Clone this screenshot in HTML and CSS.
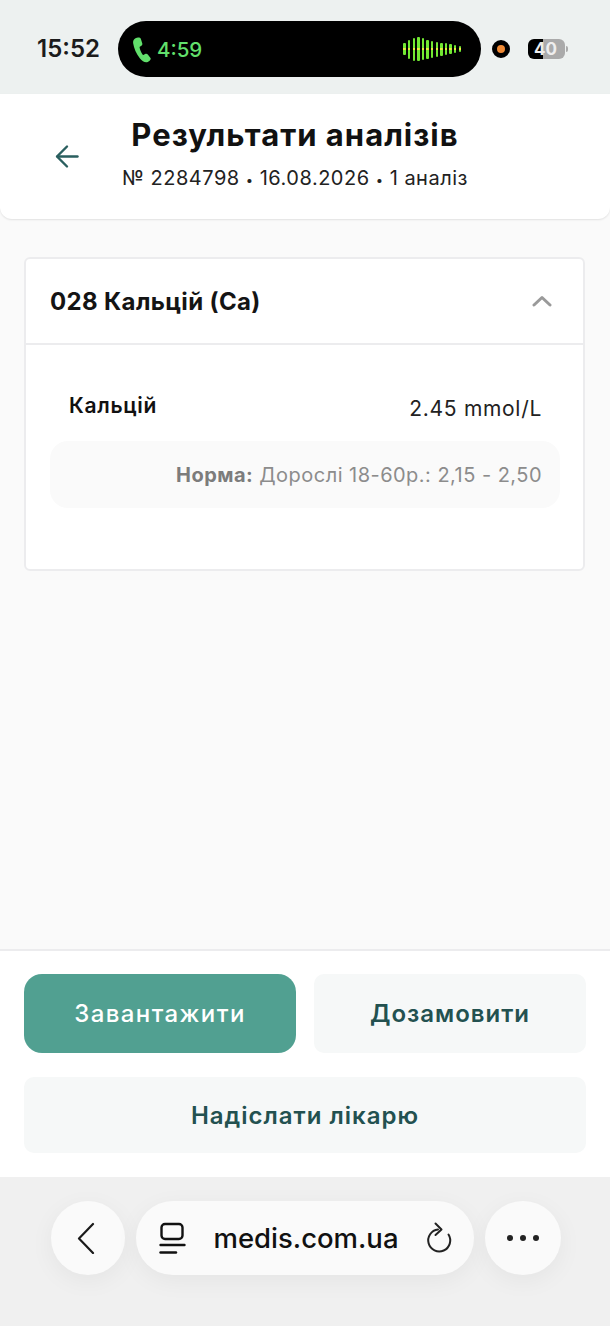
FILE: index.html
```html
<!DOCTYPE html>
<html lang="uk">
<head>
    <meta charset="UTF-8">
    <meta name="viewport" content="width=device-width, initial-scale=1.0">
    <title>Результати аналізів</title>
    <link rel="stylesheet" href="styles.css">
</head>
<body>
    <div class="status-bar">
        <span class="clock">15:52</span>
        <div class="island">
            <svg class="phone-icon" width="18" height="26" viewBox="0 0 18 26">
                <path d="M2.500 1.200 C.6 2.200 -.2 4 .2 6.500 C.9 11 3.200 16.800 7 21.500 C9.300 24.300 12.300 26 14.800 24.900 C16.900 24 18.300 22.400 17.500 21 L14.800 17.500 C14.100 16.600 13 16.400 12.100 17 L10.800 17.800 C10.300 18.100 9.800 18 9.500 17.500 C8 15.200 7 12.900 6.600 10.500 C6.500 10 6.800 9.600 7.200 9.400 L8.400 8.700 C9.300 8.200 9.500 7.300 9.300 6.400 L7.900 1.900 C7.400 .5 4.600 .1 2.500 1.200 Z" fill="#62e06c"/>
            </svg>
            <span class="call-time">4:59</span>
            <div class="wave">
                <i style="height:12px"></i><i style="height:19px"></i><i style="height:23px"></i><i style="height:24px"></i><i style="height:22px"></i><i style="height:19px"></i><i style="height:17px"></i><i style="height:15px"></i><i style="height:13px"></i><i style="height:12px"></i><i style="height:10px"></i><i style="height:8px"></i><i style="height:6px"></i>
            </div>
        </div>
        <span class="rec-dot"></span>
        <div class="battery">
            <div class="battery-body"><span>40</span></div>
            <span class="battery-tip"></span>
        </div>
    </div>

    <header class="page-head">
        <button class="back-btn" aria-label="Назад">
            <svg width="26" height="26" viewBox="0 0 26 26" fill="none" stroke="#2a5f5f" stroke-width="2.4" stroke-linecap="round" stroke-linejoin="round">
                <path d="M23.500 13.500H3.500"/>
                <path d="M13 3.500 L3 13.500 L13 23.500"/>
            </svg>
        </button>
        <div class="head-text">
            <h1>Результати аналізів</h1>
            <p>№ 2284798 <span class="sep">•</span> 16.08.2026 <span class="sep">•</span> 1 аналіз</p>
        </div>
    </header>

    <main class="content">
        <section class="card">
            <div class="card-head">
                <h2>028 Кальцій (Ca)</h2>
                <svg width="20" height="12" viewBox="0 0 20 12" fill="none" stroke="#9a9a9a" stroke-width="3" stroke-linecap="round" stroke-linejoin="round">
                    <path d="M2 10 L10 2.500 L18 10"/>
                </svg>
            </div>
            <div class="card-body">
                <div class="result-row">
                    <span class="result-name">Кальцій</span>
                    <span class="result-value">2.45 mmol/L</span>
                </div>
                <div class="norm"><b>Норма:</b> Дорослі 18-60р.: 2,15 - 2,50</div>
            </div>
        </section>
    </main>

    <div class="actions">
        <div class="actions-row">
            <button class="btn btn-primary">Завантажити</button>
            <button class="btn btn-light">Дозамовити</button>
        </div>
        <button class="btn btn-light btn-wide">Надіслати лікарю</button>
    </div>

    <div class="browser-bar">
        <button class="round-btn" aria-label="Back">
            <svg width="20" height="32" viewBox="0 0 20 32" fill="none" stroke="#1a1a1a" stroke-width="2.200" stroke-linecap="round" stroke-linejoin="round">
                <path d="M17 2 L3 16.500 L17 31"/>
            </svg>
        </button>
        <div class="url-pill">
            <svg width="28" height="32" viewBox="0 0 28 32" fill="none" stroke="#111" stroke-width="2.400" stroke-linecap="round">
                <rect x="2.500" y="2" width="21" height="15" rx="3.500"/>
                <path d="M1.500 23H25.500"/>
                <path d="M1.500 30.500H17"/>
            </svg>
            <span class="url">medis.com.ua</span>
            <svg width="28" height="32" viewBox="0 0 28 32" fill="none" stroke="#222" stroke-width="2" stroke-linecap="round" stroke-linejoin="round">
                <path d="M13 7.500 A11 11 0 1 0 23.500 12.500"/>
                <path d="M10.500 1.500 L16.500 7.500 L10.500 13"/>
            </svg>
        </div>
        <button class="round-btn round-btn-wide" aria-label="More">
            <span class="dot"></span><span class="dot"></span><span class="dot"></span>
        </button>
    </div>
</body>
</html>
```

FILE: styles.css
```css
* {
    box-sizing: border-box;
}
body {
    margin: 0;
    width: 610px;
    height: 1326px;
    display: flex;
    flex-direction: column;
    overflow: hidden;
    background: #fafafa;
    font-family: 'Inter', 'Noto Sans', sans-serif;
    color: #111;
}
button {
    font-family: inherit;
    border: none;
    cursor: pointer;
}

/* phone status bar */
.status-bar {
    height: 94px;
    flex: none;
    background: #edf1f0;
    display: flex;
    align-items: flex-start;
    padding: 21px 0 0 37px;
}
.clock {
    font-size: 24px;
    font-weight: 600;
    color: #1b1b1b;
    line-height: 56px;
    width: 81px;
}
.island {
    width: 363px;
    height: 56px;
    border-radius: 28px;
    background: #000;
    display: flex;
    align-items: center;
    padding-left: 15px;
    color: #62e06c;
}
.phone-icon {
    flex: none;
    margin-top: 1px;
}
.call-time {
    font-size: 20.5px;
    font-weight: 500;
    margin-left: 6px;
}
.wave {
    margin-left: auto;
    margin-right: 20px;
    display: flex;
    align-items: center;
    gap: 2.1px;
}
.wave i {
    display: block;
    width: 2.5px;
    border-radius: 1px;
    background: linear-gradient(#ecec40, #ecec40) center / 100% 2px no-repeat, #72e832;
}
.rec-dot {
    flex: none;
    width: 18px;
    height: 18px;
    margin: 19px 0 0 11px;
    border-radius: 50%;
    background: #f08a35;
    border: 5px solid #000;
}
.battery {
    display: flex;
    align-items: center;
    margin: 18px 0 0 18px;
}
.battery-body {
    width: 37px;
    height: 20px;
    border-radius: 6px;
    background: linear-gradient(90deg, #000 0 40%, #aaa 40%);
    color: #eee;
    font-size: 17px;
    font-weight: 700;
    line-height: 20px;
    text-align: center;
    padding-right: 2px;
}
.battery-tip {
    width: 2px;
    height: 6px;
    margin-left: 1px;
    border-radius: 0 2px 2px 0;
    background: #aaa;
}

/* page header */
.page-head {
    height: 125px;
    flex: none;
    background: #fff;
    border-radius: 0 0 12px 12px;
    box-shadow: 0 1px 2px rgba(0, 0, 0, 0.1);
    display: flex;
    position: relative;
}
.back-btn {
    background: none;
    padding: 0;
    width: 26px;
    height: 26px;
    margin: 49px 0 0 54px;
    flex: none;
}
.head-text {
    flex: 1;
    text-align: center;
    padding: 21px 20px 0 0;
    margin-left: -80px;
}
.head-text h1 {
    margin: 0;
    font-size: 31px;
    font-weight: 700;
    line-height: 40px;
    letter-spacing: 1px;
    color: #111;
}
.head-text p {
    margin: 9px 0 0;
    font-size: 20px;
    line-height: 28px;
    letter-spacing: 0.5px;
    color: #222;
}
.sep {
    font-size: 13px;
}

/* analysis card */
.content {
    flex: 1;
    padding: 38px 25px 0 24px;
}
.card {
    height: 314px;
    background: #fff;
    border: 2px solid #ececee;
    border-radius: 6px;
}
.card-head {
    height: 86px;
    border-bottom: 2px solid #ececee;
    display: flex;
    align-items: center;
    justify-content: space-between;
    padding: 0 31px 0 24px;
}
.card-head h2 {
    margin: 0;
    font-size: 24px;
    font-weight: 700;
    letter-spacing: 0.35px;
    color: #141414;
}
.card-body {
    padding: 0 23px 0 24px;
}
.result-row {
    display: flex;
    justify-content: space-between;
    padding: 47px 18px 0 19px;
    height: 96px;
}
.result-name {
    font-size: 21px;
    font-weight: 600;
    line-height: 28px;
    letter-spacing: 0.7px;
    color: #111;
}
.result-value {
    font-size: 21px;
    line-height: 34px;
    letter-spacing: 0.7px;
    color: #222;
}
.norm {
    height: 67px;
    background: #fafafa;
    border-radius: 18px;
    padding-right: 18px;
    text-align: right;
    font-size: 20px;
    line-height: 68px;
    letter-spacing: 0.47px;
    color: #8c8c8c;
}
.norm b {
    color: #7c7c7c;
}

/* bottom buttons */
.actions {
    flex: none;
    height: 228px;
    background: #fff;
    border-top: 2px solid #ececee;
    padding: 23px 24px 0;
}
.actions-row {
    display: flex;
    gap: 18px;
    margin-bottom: 24px;
}
.btn {
    flex: 1;
    height: 79px;
    font-size: 24px;
    font-weight: 600;
    letter-spacing: 1px;
    border-radius: 10px;
}
.btn-primary {
    background: #51a091;
    color: #fff;
    border-radius: 18px;
    font-weight: 500;
    letter-spacing: 1.4px;
}
.btn-light {
    background: #f6f8f8;
    color: #235150;
}
.btn-wide {
    display: block;
    width: 100%;
    height: 76px;
}

/* browser toolbar */
.browser-bar {
    flex: none;
    height: 149px;
    background: #f0f0f0;
    display: flex;
    align-items: flex-start;
    gap: 11px;
    padding: 24px 0 0 51px;
}
.round-btn {
    width: 74px;
    height: 74px;
    border-radius: 50%;
    background: #fafafa;
    box-shadow: 0 6px 24px rgba(0, 0, 0, 0.05);
    display: flex;
    align-items: center;
    justify-content: center;
    gap: 7px;
    padding: 0;
}
.round-btn-wide {
    width: 76px;
}
.round-btn svg {
    margin-left: -4px;
}
.dot {
    width: 6px;
    height: 6px;
    border-radius: 50%;
    background: #222;
}
.url-pill {
    width: 338px;
    height: 74px;
    border-radius: 37px;
    background: #fafafa;
    box-shadow: 0 6px 24px rgba(0, 0, 0, 0.05);
    display: flex;
    align-items: center;
    padding: 0 21px 0 23px;
}
.url {
    flex: 1;
    text-align: center;
    font-size: 27.5px;
    font-weight: 500;
    color: #111;
    white-space: nowrap;
}
```
